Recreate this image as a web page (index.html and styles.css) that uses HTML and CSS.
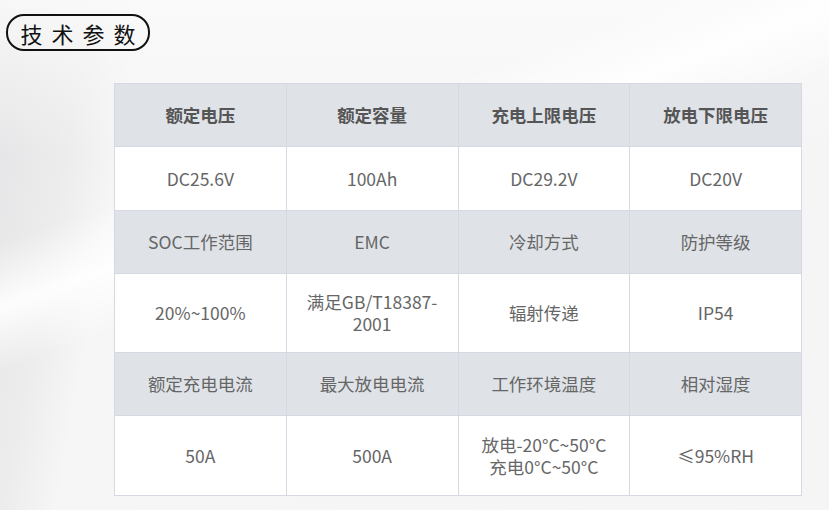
FILE: index.html
```html
<!DOCTYPE html>
<html lang="zh">
<head>
<meta charset="utf-8">
<link rel="stylesheet" href="styles.css">
</head>
<body>
<div class="page">
  <div class="title">技术参数</div>
  <table class="spec">
    <tr class="head bold">
      <td>额定电压</td><td>额定容量</td><td>充电上限电压</td><td>放电下限电压</td>
    </tr>
    <tr class="row">
      <td>DC25.6V</td><td>100Ah</td><td>DC29.2V</td><td>DC20V</td>
    </tr>
    <tr class="head">
      <td>SOC工作范围</td><td>EMC</td><td>冷却方式</td><td>防护等级</td>
    </tr>
    <tr class="row tall">
      <td>20%~100%</td><td>满足GB/T18387-<br>2001</td><td>辐射传递</td><td>IP54</td>
    </tr>
    <tr class="head">
      <td>额定充电电流</td><td>最大放电电流</td><td>工作环境温度</td><td>相对湿度</td>
    </tr>
    <tr class="row tall last">
      <td>50A</td><td>500A</td><td>放电-20°C~50°C<br>充电0°C~50°C</td><td>≤95%RH</td>
    </tr>
  </table>
</div>
</body>
</html>
```
FILE: styles.css
```css
html, body {
  margin: 0;
  padding: 0;
}
body {
  width: 829px;
  height: 510px;
  overflow: hidden;
  font-family: "Noto Sans CJK SC", "Noto Sans", sans-serif;
  background:
    linear-gradient(160deg, rgba(255,255,255,0) 30%, rgba(255,255,255,0.9) 38%, rgba(255,255,255,0) 46%),
    linear-gradient(180deg, rgba(250,250,250,0.9) 0%, rgba(250,250,250,0) 30%),
    linear-gradient(100deg, #e4e4e6 0%, #ececed 10%, #f6f6f7 16%, #f5f5f6 100%),
    #f4f4f5;
}
.page {
  padding: 14px 0 0 0;
}
.title {
  margin-left: 6px;
  width: 140px;
  height: 33px;
  border: 2px solid #111;
  border-radius: 18px;
  display: flex;
  align-items: center;
  justify-content: center;
  font-size: 22px;
  letter-spacing: 9px;
  text-indent: 9px;
  color: #111;
}
.spec {
  margin: 32px 0 0 114px;
  border-collapse: collapse;
  table-layout: fixed;
  width: 688px;
}
.spec td {
  border: 1px solid #d6d8e4;
  text-align: center;
  vertical-align: middle;
  font-size: 17.5px;
  line-height: 22px;
  color: #666;
  padding: 0 2px;
}
.head td {
  background: #dfe3e8;
  height: 62px;
}
.row td {
  background: #fff;
  height: 63px;
}
.row.tall td {
  height: 78px;
}
.row.last td {
  height: 79px;
}
.bold td {
  font-weight: 700;
  color: #555;
}
```
